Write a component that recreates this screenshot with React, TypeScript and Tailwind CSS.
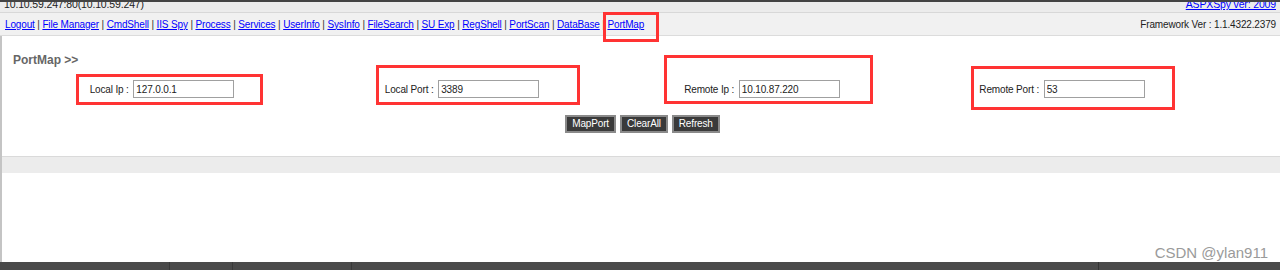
import React from "react";

const links = ["Logout", "File Manager", "CmdShell", "IIS Spy", "Process", "Services", "UserInfo", "SysInfo", "FileSearch", "SU Exp", "RegShell", "PortScan", "DataBase", "PortMap"];

const fields = [
    { label: "Local Ip", value: "127.0.0.1" },
    { label: "Local Port", value: "3389" },
    { label: "Remote Ip", value: "10.10.87.220" },
    { label: "Remote Port", value: "53" },
];

// red marks drawn over the screenshot
const marks = [
    "left-[603px] top-[12px] w-[56px] h-[30px]",
    "left-[76px] top-[74px] w-[187px] h-[31px]",
    "left-[376px] top-[65px] w-[204px] h-[40px]",
    "left-[664px] top-[55px] w-[209px] h-[49px]",
    "left-[971px] top-[66px] w-[204px] h-[44px]",
];

export default function App() {
    return (
        <div className="relative w-[1280px] h-[270px] overflow-hidden bg-white text-[10px] tracking-[-0.15px] text-[#333] font-['Liberation_Sans',Arial,sans-serif]">
            {/* top info bar, cut by the screenshot */}
            <div className="h-[13px] bg-[#ececec] border-t-2 border-[#444] flex items-end justify-between px-[4px] border-b border-b-[#d8d8d8] overflow-hidden">
                <span className="text-[10.5px] leading-[11px] text-[#222] mb-[2px]">10.10.59.247:80(10.10.59.247)</span>
                <a className="text-[10.5px] leading-[11px] text-[#00f] underline mb-[2px]">ASPXSpy ver: 2009</a>
            </div>
            {/* nav */}
            <div className="h-[23px] bg-[#f1f1f1] border-b border-[#dcdcdc] flex items-center justify-between pl-[5px] pr-[4px]">
                <div className="flex items-center">
                    {links.map((l, i) => (
                        <span key={l} className="whitespace-pre">
                            <a className="text-[#00f] underline">{l}</a>
                            {i < links.length - 1 && <span className="text-[#333]"> | </span>}
                        </span>
                    ))}
                </div>
                <span className="text-[#222]">Framework Ver : 1.1.4322.2379</span>
            </div>
            {/* content */}
            <div className="border-l-2 border-[#c4c4c4] h-[226px] flex flex-col">
                <div className="pl-[11px] pt-[15px] text-[12px] tracking-normal font-bold text-[#666]">PortMap &gt;&gt;</div>
                <div className="grid grid-cols-[300px_300px_300px_300px] ml-[10px] mt-[11px]">
                    {fields.map((f) => (
                        <div key={f.label} className="flex items-center justify-center">
                            <span className="text-[#222] mr-[2px] whitespace-pre">{f.label} : </span>
                            <input
                                readOnly
                                value={f.value}
                                className="w-[101px] h-[18px] border border-[#a0a0a0] bg-white px-[2px] text-[10px] text-[#222] outline-none"
                            />
                        </div>
                    ))}
                </div>
                <div className="flex justify-center gap-[4px] mt-[17px] ml-[3px]">
                    {["MapPort", "ClearAll", "Refresh"].map((b) => (
                        <button key={b} className="h-[18px] px-[5px] bg-[#3a3a3a] border-2 border-[#8a8a8a] text-white text-[10px] leading-[14px]">
                            {b}
                        </button>
                    ))}
                </div>
                <div className="mt-[23px] h-[17px] border-t border-[#dadada] bg-[#ececec]" />
                <div className="flex-1" />
            </div>
            {/* bottom dark bar */}
            <div className="absolute left-0 bottom-0 w-full h-[8px] bg-[#4a4a4a] flex">
                <div className="w-[170px] border-r border-[#3a3a3a]" />
                <div className="w-[63px] border-r border-[#3a3a3a]" />
                <div className="w-[119px] border-r border-[#3a3a3a]" />
                <div className="w-[747px] border-r border-[#333]" />
            </div>
            {/* watermark */}
            <div className="absolute right-[12px] bottom-[6px] text-[15px] tracking-normal text-[#9a9a9a]">CSDN @ylan911</div>
            {marks.map((m) => (
                <div key={m} className={`absolute border-[3px] border-[#f33] ${m}`} />
            ))}
        </div>
    );
}
